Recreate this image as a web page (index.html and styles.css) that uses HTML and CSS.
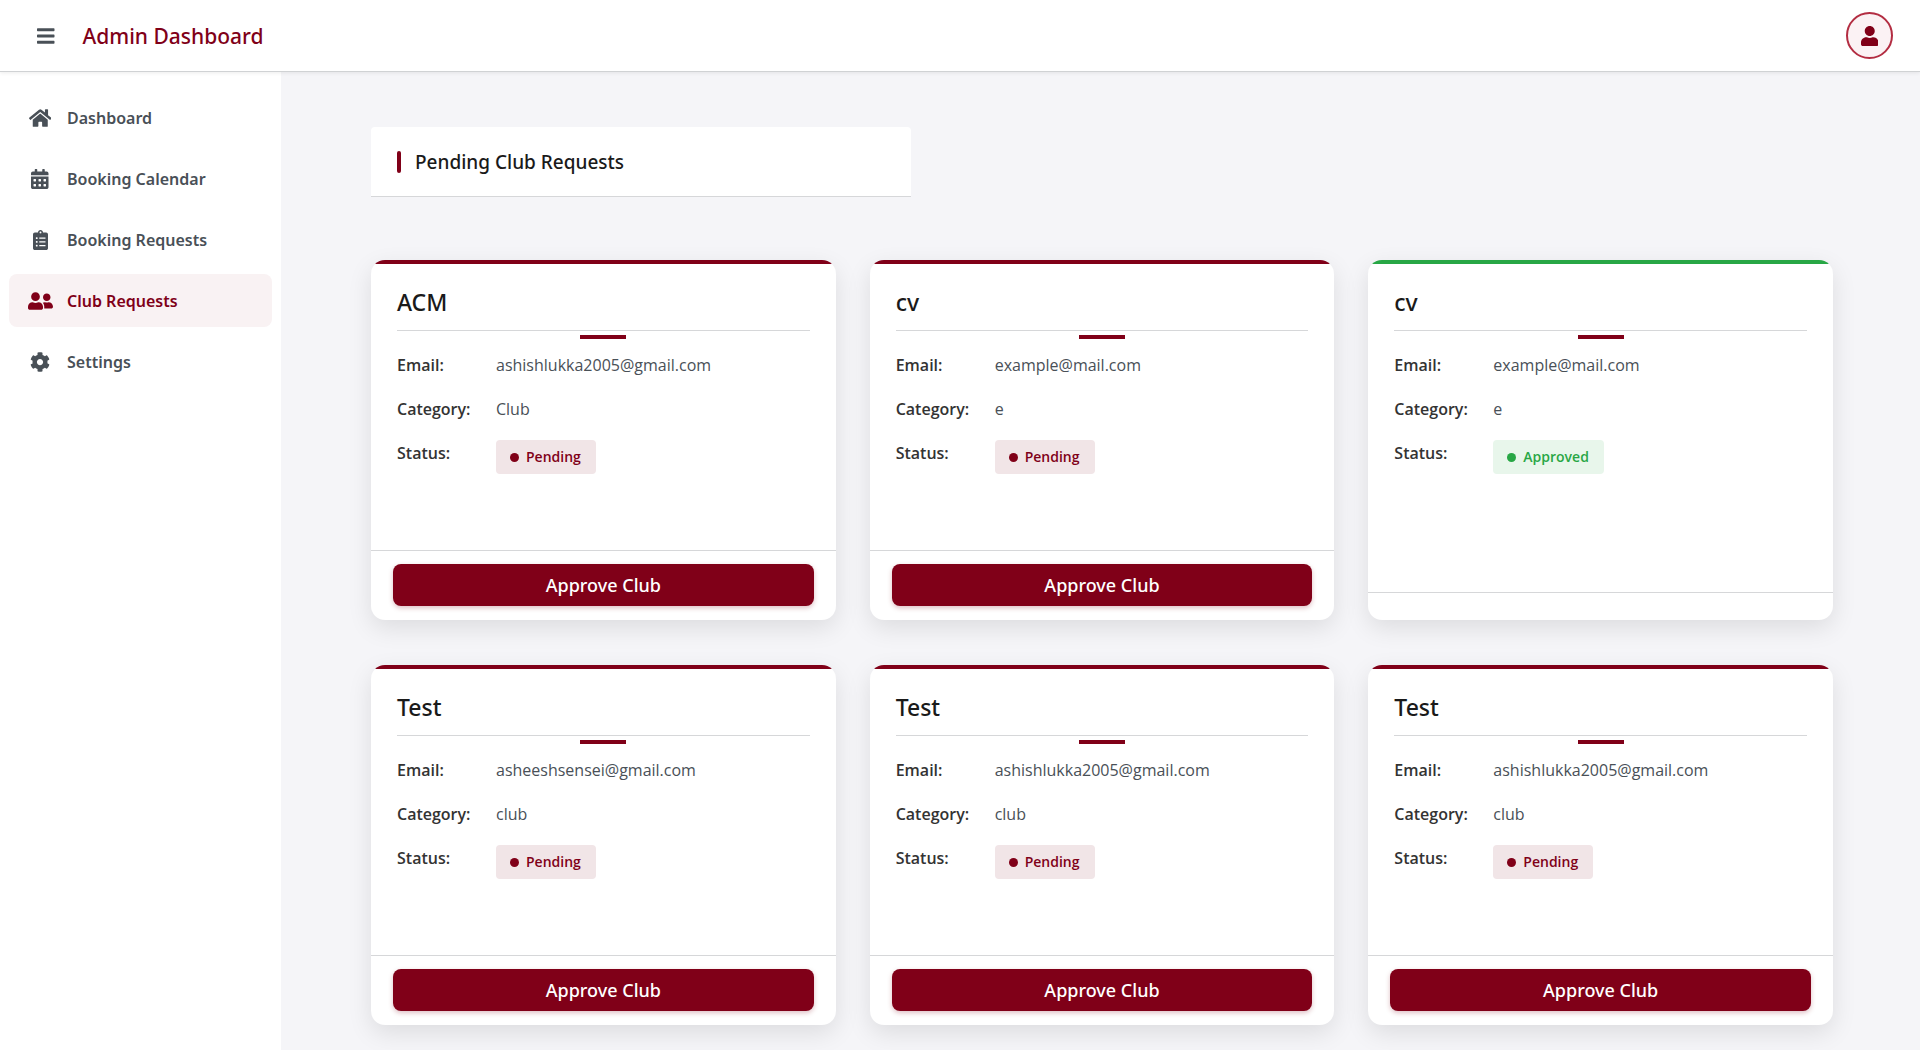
FILE: index.html
```html
<!DOCTYPE html>
<html lang="en">
<head>
<meta charset="utf-8">
<meta name="viewport" content="width=device-width, initial-scale=1">
<title>Admin Dashboard</title>
<link rel="stylesheet" href="styles.css">
</head>
<body>
<header class="topbar">
  <button class="menu-toggle" type="button" aria-label="Toggle menu">
    <svg class="icon" viewBox="0 0 448 512"><path d="M16 132h416c8.837 0 16-7.163 16-16V76c0-8.837-7.163-16-16-16H16C7.163 60 0 67.163 0 76v40c0 8.837 7.163 16 16 16zm0 160h416c8.837 0 16-7.163 16-16v-40c0-8.837-7.163-16-16-16H16c-8.837 0-16 7.163-16 16v40c0 8.837 7.163 16 16 16zm0 160h416c8.837 0 16-7.163 16-16v-40c0-8.837-7.163-16-16-16H16c-8.837 0-16 7.163-16 16v40c0 8.837 7.163 16 16 16z"/></svg>
  </button>
  <h1 class="brand">Admin Dashboard</h1>
  <button class="avatar" type="button" aria-label="Profile">
    <svg class="icon" viewBox="0 0 448 512"><path d="M224 256c70.7 0 128-57.3 128-128S294.7 0 224 0 96 57.3 96 128s57.3 128 128 128zm89.6 32h-16.7c-22.2 10.2-46.9 16-72.9 16s-50.6-5.8-72.9-16h-16.7C60.2 288 0 348.2 0 422.4V464c0 26.5 21.5 48 48 48h352c26.5 0 48-21.5 48-48v-41.6c0-74.2-60.2-134.4-134.4-134.4z"/></svg>
  </button>
</header>

<div class="layout">
  <nav class="sidebar" aria-label="Main">
    <a class="nav-item" href="#dashboard">
      <span class="nav-icon"><svg class="icon" viewBox="0 0 576 512"><path d="M280.37 148.26L96 300.11V464a16 16 0 0 0 16 16l112.06-.29a16 16 0 0 0 15.92-16V368a16 16 0 0 1 16-16h64a16 16 0 0 1 16 16v95.64a16 16 0 0 0 16 16.05L464 480a16 16 0 0 0 16-16V300L295.67 148.26a12.19 12.19 0 0 0-15.3 0zM571.6 251.47L488 182.56V44.05a12 12 0 0 0-12-12h-56a12 12 0 0 0-12 12v72.61L318.47 43a48 48 0 0 0-61 0L4.34 251.47a12 12 0 0 0-1.6 16.9l25.5 31A12 12 0 0 0 45.15 301l235.22-193.74a12.19 12.19 0 0 1 15.3 0L530.9 301a12 12 0 0 0 16.9-1.6l25.5-31a12 12 0 0 0-1.7-16.93z"/></svg></span>
      Dashboard
    </a>
    <a class="nav-item" href="#calendar">
      <span class="nav-icon"><svg class="icon" viewBox="0 0 448 512"><path d="M0 464c0 26.500 21.500 48 48 48h352c26.500 0 48-21.500 48-48V192H0v272zm320-196c0-6.600 5.400-12 12-12h40c6.600 0 12 5.400 12 12v40c0 6.600-5.400 12-12 12h-40c-6.600 0-12-5.400-12-12v-40zm0 128c0-6.600 5.400-12 12-12h40c6.600 0 12 5.400 12 12v40c0 6.600-5.400 12-12 12h-40c-6.600 0-12-5.400-12-12v-40zM192 268c0-6.600 5.400-12 12-12h40c6.600 0 12 5.400 12 12v40c0 6.600-5.400 12-12 12h-40c-6.600 0-12-5.400-12-12v-40zm0 128c0-6.600 5.400-12 12-12h40c6.600 0 12 5.400 12 12v40c0 6.600-5.400 12-12 12h-40c-6.600 0-12-5.400-12-12v-40zM64 268c0-6.600 5.400-12 12-12h40c6.600 0 12 5.400 12 12v40c0 6.600-5.400 12-12 12H76c-6.600 0-12-5.400-12-12v-40zm0 128c0-6.600 5.400-12 12-12h40c6.600 0 12 5.400 12 12v40c0 6.600-5.400 12-12 12H76c-6.600 0-12-5.400-12-12v-40zM400 64h-48V16c0-8.800-7.200-16-16-16h-32c-8.800 0-16 7.200-16 16v48H160V16c0-8.800-7.200-16-16-16h-32c-8.800 0-16 7.200-16 16v48H48C21.500 64 0 85.500 0 112v48h448v-48c0-26.500-21.500-48-48-48z"/></svg></span>
      Booking Calendar
    </a>
    <a class="nav-item" href="#bookings">
      <span class="nav-icon"><svg class="icon" viewBox="0 0 384 512"><path d="M336 64h-80c0-35.300-28.700-64-64-64s-64 28.700-64 64H48C21.500 64 0 85.500 0 112v352c0 26.500 21.500 48 48 48h288c26.500 0 48-21.500 48-48V112c0-26.500-21.500-48-48-48zM96 424c-13.300 0-24-10.700-24-24s10.700-24 24-24 24 10.700 24 24-10.700 24-24 24zm0-96c-13.300 0-24-10.700-24-24s10.700-24 24-24 24 10.700 24 24-10.700 24-24 24zm0-96c-13.300 0-24-10.700-24-24s10.700-24 24-24 24 10.700 24 24-10.700 24-24 24zm96-192c13.300 0 24 10.700 24 24s-10.700 24-24 24-24-10.700-24-24 10.700-24 24-24zm128 368c0 4.400-3.600 8-8 8H168c-4.400 0-8-3.600-8-8v-16c0-4.400 3.600-8 8-8h144c4.400 0 8 3.600 8 8v16zm0-96c0 4.400-3.600 8-8 8H168c-4.400 0-8-3.600-8-8v-16c0-4.400 3.600-8 8-8h144c4.400 0 8 3.600 8 8v16zm0-96c0 4.400-3.600 8-8 8H168c-4.400 0-8-3.600-8-8v-16c0-4.400 3.600-8 8-8h144c4.400 0 8 3.600 8 8v16z"/></svg></span>
      Booking Requests
    </a>
    <a class="nav-item nav-item--active" href="#clubs" aria-current="page">
      <span class="nav-icon"><svg class="icon" viewBox="0 0 640 512"><path d="M192 256c61.9 0 112-50.1 112-112S253.900 32 192 32 80 82.100 80 144s50.100 112 112 112zm76.800 32h-8.300c-20.800 10-43.900 16-68.500 16s-47.600-6-68.500-16h-8.300C51.600 288 0 339.600 0 403.200V432c0 26.500 21.500 48 48 48h288c26.500 0 48-21.500 48-48v-28.800c0-63.600-51.600-115.200-115.200-115.200zM480 256c53 0 96-43 96-96s-43-96-96-96-96 43-96 96 43 96 96 96zm48 32h-3.800c-13.900 4.800-28.600 8-44.200 8s-30.300-3.200-44.200-8H432c-20.400 0-39.200 5.900-55.700 15.400 24.400 26.300 39.700 61.200 39.700 99.800v38.400c0 2.200-.5 4.300-.6 6.400H592c26.500 0 48-21.500 48-48 0-61.900-50.100-112-112-112z"/></svg></span>
      Club Requests
    </a>
    <a class="nav-item" href="#settings">
      <span class="nav-icon"><svg class="icon" viewBox="0 0 512 512"><path d="M487.400 315.700l-42.600-24.600c4.300-23.200 4.300-47 0-70.200l42.600-24.600c4.900-2.800 7.100-8.600 5.500-14-11.100-35.600-30-67.800-54.700-94.600-3.800-4.100-10-5.100-14.800-2.300L380.800 110c-17.900-15.400-38.500-27.300-60.800-35.100V25.800c0-5.600-3.900-10.500-9.400-11.700-36.700-8.200-74.300-7.800-109.200 0-5.500 1.200-9.400 6.100-9.400 11.700V75c-22.200 7.900-42.800 19.800-60.800 35.100L88.700 85.500c-4.900-2.800-11-1.900-14.800 2.300-24.700 26.700-43.600 58.900-54.700 94.600-1.700 5.400.6 11.200 5.500 14L67.300 221c-4.300 23.200-4.300 47 0 70.200l-42.600 24.600c-4.900 2.800-7.100 8.600-5.500 14 11.100 35.600 30 67.800 54.700 94.600 3.800 4.100 10 5.100 14.800 2.300l42.600-24.600c17.900 15.400 38.500 27.300 60.800 35.100v49.200c0 5.600 3.900 10.500 9.400 11.700 36.700 8.200 74.300 7.800 109.200 0 5.500-1.200 9.400-6.100 9.400-11.700v-49.200c22.200-7.900 42.800-19.800 60.800-35.100l42.600 24.600c4.900 2.800 11 1.900 14.800-2.300 24.700-26.700 43.600-58.900 54.700-94.600 1.500-5.500-.7-11.300-5.600-14.100zM256 336c-44.100 0-80-35.900-80-80s35.900-80 80-80 80 35.900 80 80-35.900 80-80 80z"/></svg></span>
      Settings
    </a>
  </nav>

  <main class="content">
    <div class="page-head"><h2 class="page-title">Pending Club Requests</h2></div>

    <div class="cards">
      <article class="card">
        <h3 class="card-title">ACM</h3>
        <dl class="details">
          <dt>Email:</dt><dd>ashishlukka2005@gmail.com</dd>
          <dt>Category:</dt><dd>Club</dd>
          <dt>Status:</dt><dd><span class="badge">Pending</span></dd>
        </dl>
        <footer class="card-foot"><button class="approve" type="button">Approve Club</button></footer>
      </article>
      <article class="card">
        <h3 class="card-title">cv</h3>
        <dl class="details">
          <dt>Email:</dt><dd>example@mail.com</dd>
          <dt>Category:</dt><dd>e</dd>
          <dt>Status:</dt><dd><span class="badge">Pending</span></dd>
        </dl>
        <footer class="card-foot"><button class="approve" type="button">Approve Club</button></footer>
      </article>
      <article class="card card--approved">
        <h3 class="card-title">cv</h3>
        <dl class="details">
          <dt>Email:</dt><dd>example@mail.com</dd>
          <dt>Category:</dt><dd>e</dd>
          <dt>Status:</dt><dd><span class="badge badge--approved">Approved</span></dd>
        </dl>
        <footer class="card-foot"></footer>
      </article>
      <article class="card">
        <h3 class="card-title">Test</h3>
        <dl class="details">
          <dt>Email:</dt><dd>asheeshsensei@gmail.com</dd>
          <dt>Category:</dt><dd>club</dd>
          <dt>Status:</dt><dd><span class="badge">Pending</span></dd>
        </dl>
        <footer class="card-foot"><button class="approve" type="button">Approve Club</button></footer>
      </article>
      <article class="card">
        <h3 class="card-title">Test</h3>
        <dl class="details">
          <dt>Email:</dt><dd>ashishlukka2005@gmail.com</dd>
          <dt>Category:</dt><dd>club</dd>
          <dt>Status:</dt><dd><span class="badge">Pending</span></dd>
        </dl>
        <footer class="card-foot"><button class="approve" type="button">Approve Club</button></footer>
      </article>
      <article class="card">
        <h3 class="card-title">Test</h3>
        <dl class="details">
          <dt>Email:</dt><dd>ashishlukka2005@gmail.com</dd>
          <dt>Category:</dt><dd>club</dd>
          <dt>Status:</dt><dd><span class="badge">Pending</span></dd>
        </dl>
        <footer class="card-foot"><button class="approve" type="button">Approve Club</button></footer>
      </article>
    </div>
  </main>
</div>
</body>
</html>
```
FILE: styles.css
```css
:root {
  --maroon: #800018;
  --green: #28a745;
  --slate: #495057;
  --line: #d6d7d9;
}

* { box-sizing: border-box; }

body {
  display: flex;
  flex-direction: column;
  min-height: 100vh;
  margin: 0;
  background: #f5f5f8;
  color: #1a1a1a;
  font: 400 16px/26px "Open Sans", "Noto Sans", sans-serif;
}

h1, h2, h3, dl, dd { margin: 0; }

button { font: inherit; cursor: pointer; }

.icon {
  display: block;
  height: 20px;
  fill: currentColor;
}

/* Top bar */
.topbar {
  position: relative;
  z-index: 1;
  display: flex;
  align-items: center;
  height: 72px;
  padding: 0 27px;
  background: #fff;
  border-bottom: 1px solid #d0d2d4;
  box-shadow: 0 1px 4px rgba(0, 0, 0, 0.08);
}

.menu-toggle {
  padding: 10px;
  border: 0;
  background: none;
  color: var(--slate);
}

.brand {
  margin-left: 18px;
  color: var(--maroon);
  font: 500 21px/32px "Noto Sans", sans-serif;
}

.avatar {
  display: grid;
  place-items: center;
  width: 47px;
  height: 47px;
  margin-left: auto;
  padding: 0;
  border: 2px solid #b32d42;
  border-radius: 50%;
  background: #fbf2f4;
  color: var(--maroon);
}

.layout {
  display: flex;
  flex: 1;
}

/* Sidebar */
.sidebar {
  display: flex;
  flex: 0 0 281px;
  flex-direction: column;
  gap: 8px;
  padding: 19px 9px;
  background: #fff;
}

.nav-item {
  display: flex;
  align-items: center;
  gap: 13px;
  height: 53px;
  padding: 0 17px;
  border-radius: 8px;
  color: var(--slate);
  font: 600 16px/26px "Noto Sans", sans-serif;
  text-decoration: none;
}

.nav-item--active {
  background: #f9f2f3;
  color: var(--maroon);
}

.nav-icon {
  display: flex;
  justify-content: center;
  width: 28px;
}

/* Page content */
.content {
  flex: 1;
  min-width: 0;
  padding: 55px 87px 25px 90px;
}

.page-head {
  max-width: 540px;
  margin-bottom: 63px;
  padding: 22px 26px 21px;
  background: #fff;
  border-bottom: 1px solid var(--line);
  border-radius: 4px 4px 0 0;
}

.page-title {
  display: flex;
  align-items: center;
  gap: 14px;
  font: 500 19px/26px "Noto Sans", sans-serif;
}

.page-title::before {
  content: "";
  width: 4px;
  height: 22px;
  border-radius: 2px;
  background: var(--maroon);
}

.cards {
  display: grid;
  grid-template-columns: repeat(3, minmax(0, 1fr));
  gap: 45px 34px;
}

.card {
  display: flex;
  flex-direction: column;
  min-height: 360px;
  padding-top: 25px;
  border-radius: 14px;
  background: linear-gradient(var(--maroon), var(--maroon)) top / 100% 4px no-repeat #fff;
  box-shadow: 0 8px 24px rgba(0, 0, 0, 0.1);
}

.card--approved {
  background-image: linear-gradient(var(--green), var(--green));
}

.card-title {
  position: relative;
  margin: 0 26px 21px;
  padding-bottom: 11px;
  border-bottom: 1px solid var(--line);
  font: 500 23px/34px "Noto Sans", sans-serif;
}

/* Short accent bar hanging under the title rule */
.card-title::after {
  content: "";
  position: absolute;
  top: 50px;
  left: calc(50% - 23px);
  width: 46px;
  height: 4px;
  background: var(--maroon);
}

.details {
  display: grid;
  grid-template-columns: 82px 1fr;
  gap: 18px 17px;
  padding: 0 26px;
}

.details dt {
  color: #333;
  font-weight: 600;
}

.details dd { color: var(--slate); }

.badge {
  display: inline-flex;
  align-items: center;
  gap: 7px;
  padding: 4px 15px 4px 14px;
  border-radius: 4px;
  background: #f1e5e7;
  color: var(--maroon);
  font-size: 14px;
  font-weight: 600;
  vertical-align: top;
}

.badge::before {
  content: "";
  width: 9px;
  height: 9px;
  border-radius: 50%;
  background: currentColor;
}

.badge--approved {
  background: #e8f6eb;
  color: var(--green);
}

.card-foot {
  margin-top: auto;
  padding: 13px 22px 14px;
  border-top: 1px solid var(--line);
}

.approve {
  display: block;
  width: 100%;
  height: 42px;
  padding: 0;
  border: 0;
  border-radius: 8px;
  background: var(--maroon);
  box-shadow: 0 2px 5px rgba(128, 0, 24, 0.25);
  color: #fff;
  font: 500 18px/26px "Noto Sans", sans-serif;
}
```
